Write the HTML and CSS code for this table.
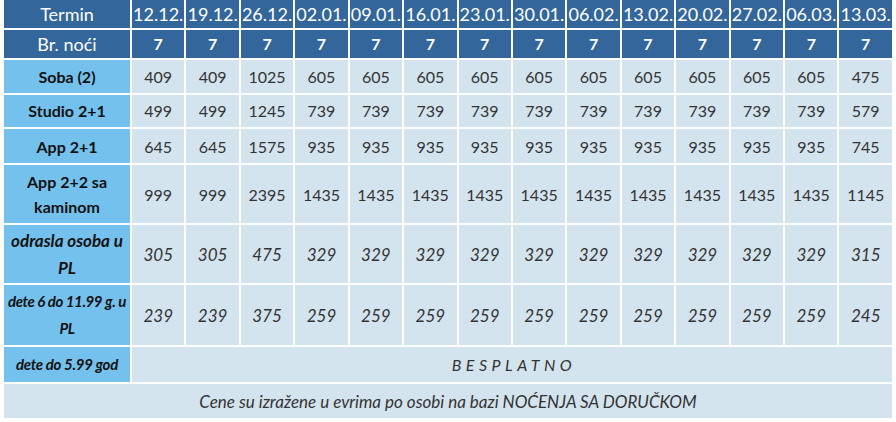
FILE: index.html
```html
<!DOCTYPE html>
<html lang="sr">
<head>
<meta charset="utf-8">
<title>Cenovnik</title>
<link rel="stylesheet" href="styles.css">
</head>
<body>
<div class="wrap">
<table class="prices">
  <colgroup>
    <col class="c-label">
    <col span="14">
  </colgroup>
  <tr class="hd">
    <th class="lab">Termin</th>
    <th>12.12.</th><th>19.12.</th><th>26.12.</th><th>02.01.</th><th>09.01.</th><th>16.01.</th><th>23.01.</th><th>30.01.</th><th>06.02.</th><th>13.02.</th><th>20.02.</th><th>27.02.</th><th>06.03.</th><th>13.03.</th>
  </tr>
  <tr class="hd nights">
    <th class="lab">Br. noći</th>
    <th>7</th><th>7</th><th>7</th><th>7</th><th>7</th><th>7</th><th>7</th><th>7</th><th>7</th><th>7</th><th>7</th><th>7</th><th>7</th><th>7</th>
  </tr>
  <tr class="row">
    <th>Soba (2)</th>
    <td>409</td><td>409</td><td>1025</td><td>605</td><td>605</td><td>605</td><td>605</td><td>605</td><td>605</td><td>605</td><td>605</td><td>605</td><td>605</td><td>475</td>
  </tr>
  <tr class="row r2">
    <th>Studio 2+1</th>
    <td>499</td><td>499</td><td>1245</td><td>739</td><td>739</td><td>739</td><td>739</td><td>739</td><td>739</td><td>739</td><td>739</td><td>739</td><td>739</td><td>579</td>
  </tr>
  <tr class="row r3">
    <th>App 2+1</th>
    <td>645</td><td>645</td><td>1575</td><td>935</td><td>935</td><td>935</td><td>935</td><td>935</td><td>935</td><td>935</td><td>935</td><td>935</td><td>935</td><td>745</td>
  </tr>
  <tr class="row r4">
    <th>App 2+2 sa kaminom</th>
    <td>999</td><td>999</td><td>2395</td><td>1435</td><td>1435</td><td>1435</td><td>1435</td><td>1435</td><td>1435</td><td>1435</td><td>1435</td><td>1435</td><td>1435</td><td>1145</td>
  </tr>
  <tr class="row it adult">
    <th>odrasla osoba u PL</th>
    <td>305</td><td>305</td><td>475</td><td>329</td><td>329</td><td>329</td><td>329</td><td>329</td><td>329</td><td>329</td><td>329</td><td>329</td><td>329</td><td>315</td>
  </tr>
  <tr class="row it child">
    <th>dete 6 do 11.99 g. u PL</th>
    <td>239</td><td>239</td><td>375</td><td>259</td><td>259</td><td>259</td><td>259</td><td>259</td><td>259</td><td>259</td><td>259</td><td>259</td><td>259</td><td>245</td>
  </tr>
  <tr class="row it small">
    <th>dete do 5.99 god</th>
    <td colspan="14" class="free">BESPLATNO</td>
  </tr>
  <tr class="note">
    <td colspan="15">Cene su izražene u evrima po osobi na bazi <span class="up">NOĆENJA SA DORUČKOM</span></td>
  </tr>
</table>
</div>
</body>
</html>
```

FILE: styles.css
```css
html, body {
  margin: 0;
  padding: 0;
  background: #ffffff;
}

.wrap {
  padding: 0 2px;
}

.prices {
  margin-top: -2px;
  width: 892px;
  table-layout: fixed;
  border-collapse: separate;
  border-spacing: 2px;
  font-family: Lato, "Open Sans", sans-serif;
  font-size: 16px;
  color: #333333;
}

.c-label {
  width: 126px;
}

.prices th,
.prices td {
  padding: 4px 0;
  text-align: center;
  vertical-align: middle;
  white-space: normal;
}

.hd th {
  background: #33669a;
  color: #ffffff;
  font-weight: 400;
  font-size: 18px;
  line-height: 20px;
  padding: 4px 0;
}

.nights th {
  font-weight: 700;
  font-size: 16px;
}

.nights th.lab {
  font-weight: 400;
  font-size: 18px;
}

.row th {
  background: #74c1ed;
  color: #111111;
  font-weight: 700;
  font-size: 16px;
  line-height: 25px;
  padding: 4px 6px;
}

.row td {
  background: #d4e4ef;
  line-height: 25px;
}

.r3 th, .r3 td {
  padding-top: 5px;
  padding-bottom: 4px;
}

.r2 th, .r2 td {
  padding-top: 3px;
  padding-bottom: 4px;
}

.it th {
  font-style: italic;
}

.it td {
  font-style: italic;
  font-size: 17px;
}

.adult th {
  font-size: 17px;
  line-height: 27px;
  padding: 2px 6px;
}

.adult td {
  line-height: 27px;
  padding: 2px 0;
}

.child th {
  font-size: 15px;
  letter-spacing: -0.4px;
  line-height: 27px;
  padding: 3px 2px;
}

.child td {
  line-height: 27px;
  padding: 3px 0;
}

.small th {
  font-size: 15px;
  letter-spacing: -0.3px;
  line-height: 25px;
  padding: 5px 2px 5px;
}

.small td.free {
  letter-spacing: 4.5px;
  font-size: 16px;
  padding-left: 4px;
}

.note td {
  background: #d4e4ef;
  font-style: italic;
  font-size: 17px;
  line-height: 25px;
  padding: 5px 0 4px;
}
```
